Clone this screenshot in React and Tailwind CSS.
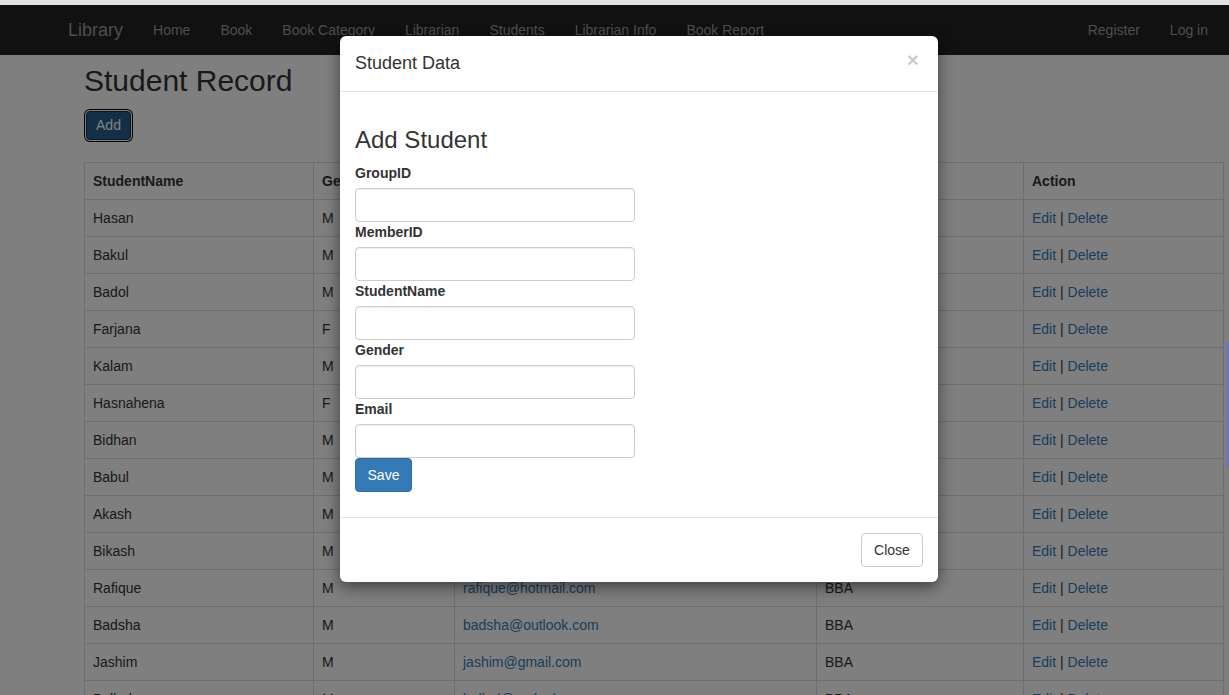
const students = [
  ["Hasan", "M", "hasan@gmail.com"],
  ["Bakul", "M", "bakul@gmail.com"],
  ["Badol", "M", "badol@yahoo.com"],
  ["Farjana", "F", "farjana@gmail.com"],
  ["Kalam", "M", "kalam@outlook.com"],
  ["Hasnahena", "F", "hasnahena@gmail.com"],
  ["Bidhan", "M", "bidhan@yahoo.com"],
  ["Babul", "M", "babul@gmail.com"],
  ["Akash", "M", "akash@gmail.com"],
  ["Bikash", "M", "bikash@hotmail.com"],
  ["Rafique", "M", "rafique@hotmail.com"],
  ["Badsha", "M", "badsha@outlook.com"],
  ["Jashim", "M", "jashim@gmail.com"],
  ["Bulbul", "M", "bulbul@outlook.com"],
];

const navLinks = ["Home", "Book", "Book Category", "Librarian", "Students", "Librarian Info", "Book Report"];
const fields = ["GroupID", "MemberID", "StudentName", "Gender", "Email"];

function Navbar() {
  return (
    <nav className="h-[50px] bg-[#222]">
      <div className="ml-[53px] w-[1170px] flex justify-between">
        <div className="flex">
          <a className="px-[15px] py-[15px] text-[18px] leading-[20px] text-[#9d9d9d]">Library</a>
          <ul className="flex">
            {navLinks.map((l) => (
              <li key={l}>
                <a className="block px-[15px] py-[15px] text-[14px] leading-[20px] text-[#9d9d9d]">{l}</a>
              </li>
            ))}
          </ul>
        </div>
        <ul className="flex">
          <li>
            <a className="block px-[15px] py-[15px] text-[14px] leading-[20px] text-[#9d9d9d]">Register</a>
          </li>
          <li>
            <a className="block px-[15px] py-[15px] text-[14px] leading-[20px] text-[#9d9d9d]">Log in</a>
          </li>
        </ul>
      </div>
    </nav>
  );
}

function StudentTable() {
  return (
    <table className="mt-[22px] w-[1139px] table-fixed border-collapse border border-[#ddd] text-[14px] leading-[20px] text-[#333]">
      <colgroup>
        <col className="w-[229px]" />
        <col className="w-[141px]" />
        <col className="w-[362px]" />
        <col className="w-[207px]" />
        <col className="w-[200px]" />
      </colgroup>
      <thead>
        <tr>
          {["StudentName", "Gender", "Email", "Department", "Action"].map((h) => (
            <th key={h} className="border border-[#ddd] px-[8px] py-[8px] text-left font-bold">
              {h}
            </th>
          ))}
        </tr>
      </thead>
      <tbody>
        {students.map(([name, gender, email]) => (
          <tr key={name}>
            <td className="border border-[#ddd] px-[8px] py-[8px]">{name}</td>
            <td className="border border-[#ddd] px-[8px] py-[8px]">{gender}</td>
            <td className="border border-[#ddd] px-[8px] py-[8px]">
              <a className="text-[#337ab7]">{email}</a>
            </td>
            <td className="border border-[#ddd] px-[8px] py-[8px]">BBA</td>
            <td className="border border-[#ddd] px-[8px] py-[8px]">
              <a className="text-[#337ab7]">Edit</a> | <a className="text-[#337ab7]">Delete</a>
            </td>
          </tr>
        ))}
      </tbody>
    </table>
  );
}

function StudentModal() {
  return (
    <div className="absolute left-[340px] top-[36px] w-[598px] rounded-[6px] bg-white text-[#333] shadow-[0_5px_15px_rgba(0,0,0,0.5)]">
      <div className="flex h-[56px] items-center justify-between border-b border-[#e5e5e5] px-[15px]">
        <h4 className="-mt-[2px] text-[18px] leading-[20px]">Student Data</h4>
        <button className="-mt-[8px] mr-[4px] text-[21px] font-bold leading-none text-black opacity-20">×</button>
      </div>
      <div className="px-[15px] pt-[15px] pb-[25px]">
        <h3 className="mt-[20px] mb-[10px] text-[24px] leading-[26px]">Add Student</h3>
        {fields.map((f) => (
          <div key={f}>
            <label className="mb-[5px] block text-[14px] font-bold leading-[20px]">{f}</label>
            <input className="block h-[34px] w-[280px] rounded-[4px] border border-[#ccc] px-[12px] shadow-[inset_0_1px_1px_rgba(0,0,0,0.075)]" />
          </div>
        ))}
        <button className="h-[34px] w-[57px] rounded-[4px] border border-[#2e6da4] bg-[#337ab7] text-[14px] text-white">
          Save
        </button>
      </div>
      <div className="flex justify-end border-t border-[#e5e5e5] p-[15px]">
        <button className="h-[34px] w-[62px] rounded-[4px] border border-[#ccc] bg-white text-[14px] text-[#333]">
          Close
        </button>
      </div>
    </div>
  );
}

export default function App() {
  return (
    <div className="relative h-[695px] w-[1229px] overflow-hidden bg-white font-['Liberation_Sans',Arial,sans-serif]">
      <div className="h-[5px] bg-[#e1e1e1]" />
      <Navbar />
      <main className="ml-[53px] w-[1170px] pl-[31px]">
        <h2 className="mt-[9px] text-[30px] leading-[33px] text-[#333]">Student Record</h2>
        <button className="mt-[14px] ml-[2px] h-[29px] w-[45px] rounded-[4px] border border-[#122b40] bg-[#286090] text-[14px] text-white shadow-[0_0_0_1px_#fff,0_0_0_2px_#000]">
          Add
        </button>
        <StudentTable />
      </main>

      {/* modal backdrop */}
      <div className="absolute inset-x-0 top-[5px] bottom-0 bg-black/50" />
      <StudentModal />
      <div className="absolute right-0 top-[342px] h-[125px] w-[3px] bg-[#6b76ae]" />
    </div>
  );
}
